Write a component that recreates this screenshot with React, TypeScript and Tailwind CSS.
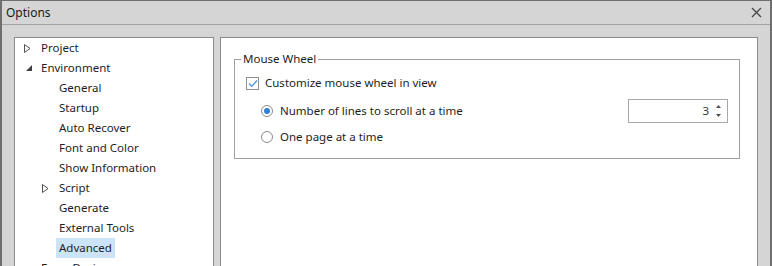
import React from "react";

const font = { fontFamily: '"Noto Sans", "Segoe UI", sans-serif' };

function TreeRow({
  label,
  indent,
  arrow,
  selected,
}: {
  label: string;
  indent: number;
  arrow?: "closed" | "open";
  selected?: boolean;
}) {
  return (
    <div className="h-[20px] flex items-center relative" style={{ paddingLeft: indent }}>
      {arrow === "closed" && (
        <svg className="absolute top-[6px]" style={{ left: indent - 14 }} width="7" height="9" viewBox="0 0 7 9">
          <path d="M0.5 0.5 L6 4.5 L0.5 8.5 Z" fill="none" stroke="#505050" strokeWidth="1" />
        </svg>
      )}
      {arrow === "open" && (
        <svg className="absolute top-[7px]" style={{ left: indent - 12 }} width="6" height="6" viewBox="0 0 6 6">
          <path d="M6 0 L6 6 L0 6 Z" fill="#404040" />
        </svg>
      )}
      <span
        className={
          "h-[20px] leading-[20px] px-[3px] text-[11.5px] text-[#1e1e1e] " +
          (selected ? "bg-[#cce4f7]" : "")
        }
      >
        {label}
      </span>
    </div>
  );
}

export default function App() {
  return (
    <div
      className="w-[772px] h-[266px] overflow-hidden bg-[#d5d5d5] border-t border-l-2 border-r-2 border-[#6e6e6e]"
      style={font}
    >
      {/* title bar */}
      <div className="h-[24px] flex items-center justify-between border-b border-[#a3a3a3] pl-[4px] pr-[8px]">
        <span className="text-[12px] text-[#1a1a1a]">Options</span>
        <svg width="11" height="11" viewBox="0 0 11 11">
          <path d="M1 1 L10 10 M10 1 L1 10" stroke="#4a4a4a" strokeWidth="1.4" />
        </svg>
      </div>

      <div className="flex gap-[6px] pt-[12px] pl-[12px]">
        {/* tree */}
        <div className="w-[200px] h-[240px] bg-white border border-[#8c8c8c] border-b-0">
          <TreeRow label="Project" indent={23} arrow="closed" />
          <TreeRow label="Environment" indent={23} arrow="open" />
          <TreeRow label="General" indent={41} />
          <TreeRow label="Startup" indent={41} />
          <TreeRow label="Auto Recover" indent={41} />
          <TreeRow label="Font and Color" indent={41} />
          <TreeRow label="Show Information" indent={41} />
          <TreeRow label="Script" indent={41} arrow="closed" />
          <TreeRow label="Generate" indent={41} />
          <TreeRow label="External Tools" indent={41} />
          <TreeRow label="Advanced" indent={41} selected />
          <TreeRow label="Form Design" indent={23} />
        </div>

        {/* settings */}
        <div className="w-[538px] h-[240px] bg-white border border-[#8c8c8c] border-b-0 pt-[21px] pl-[13px]">
          <div className="relative w-[506px] h-[100px] border border-[#a0a0a0]">
            <span className="absolute left-[6px] top-[-10px] bg-white px-[2px] text-[11.5px] leading-[18px] text-[#1e1e1e]">
              Mouse Wheel
            </span>
            <div className="flex items-center gap-[6px] pl-[11px] pt-[16px]">
              <div className="w-[13px] h-[13px] border border-[#8f8f8f] flex items-center justify-center">
                <svg width="10" height="9" viewBox="0 0 10 9">
                  <path d="M1 4.5 L3.8 7.3 L9 1.5" fill="none" stroke="#3d8ee0" strokeWidth="1.2" />
                </svg>
              </div>
              <span className="text-[11.5px] text-[#1e1e1e] leading-[14px]">Customize mouse wheel in view</span>
            </div>
            <div className="flex items-center pl-[26px] mt-[9px] h-[23px]">
              <div className="w-[12px] h-[12px] rounded-full border border-[#8a8a8a] flex items-center justify-center">
                <div className="w-[6px] h-[6px] rounded-full bg-[#2f7fd6]" />
              </div>
              <span className="ml-[7px] text-[11.5px] text-[#1e1e1e]">Number of lines to scroll at a time</span>
              <div className="ml-auto mr-[11px] w-[100px] h-[24px] border border-[#a8a8a8] flex items-center justify-end">
                <span className="text-[11.5px] text-[#333] mr-[7px]">3</span>
                <div className="flex flex-col gap-[6px] mr-[6px]">
                  <svg width="5" height="3" viewBox="0 0 5 3"><path d="M0 3 L2.5 0 L5 3 Z" fill="#505050" /></svg>
                  <svg width="5" height="3" viewBox="0 0 5 3"><path d="M0 0 L2.5 3 L5 0 Z" fill="#505050" /></svg>
                </div>
              </div>
            </div>
            <div className="flex items-center pl-[26px] mt-[6px]">
              <div className="w-[12px] h-[12px] rounded-full border border-[#8a8a8a]" />
              <span className="ml-[7px] text-[11.5px] text-[#1e1e1e]">One page at a time</span>
            </div>
          </div>
        </div>
      </div>
    </div>
  );
}
